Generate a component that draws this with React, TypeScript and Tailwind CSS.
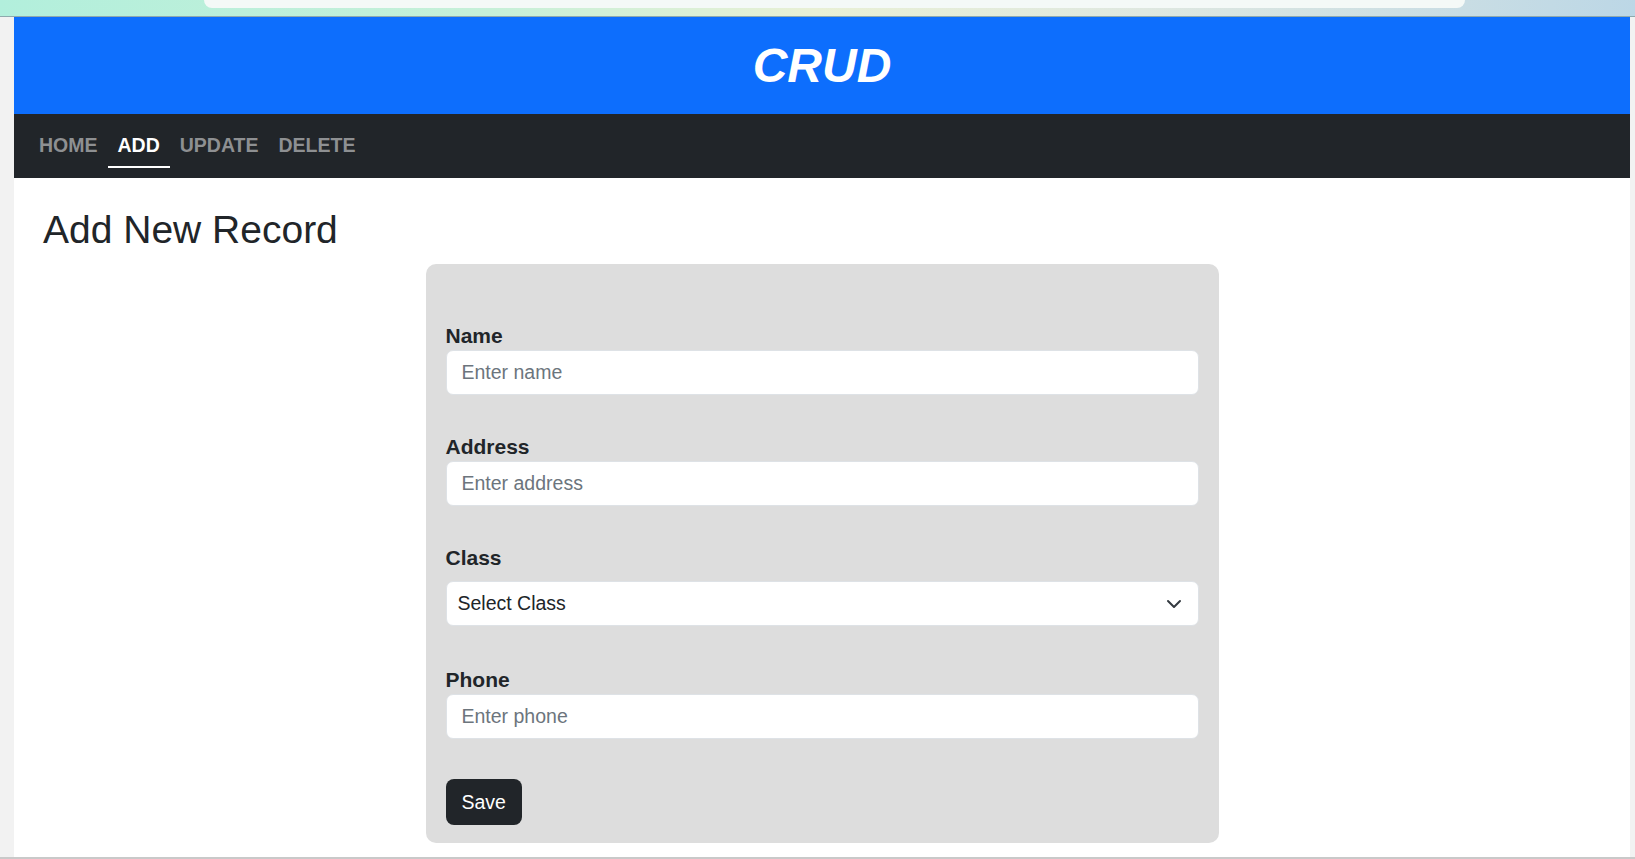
import { useState } from "react";

const links = ["HOME", "ADD", "UPDATE", "DELETE"];

function Field({ label, placeholder, gap = "mb-[38px]" }: { label: string; placeholder: string; gap?: string }) {
  return (
    <div className={`${gap} flex flex-col`}>
      <label className="text-[21px] font-bold leading-[28px] text-[#212529]">{label}</label>
      <input
        type="text"
        placeholder={placeholder}
        className="h-[45px] w-full rounded-[7px] border border-[#dee2e6] bg-white pl-[15px] text-[19.5px] text-[#212529] outline-none placeholder:text-[#6c757d]"
      />
    </div>
  );
}

export default function App() {
  const [active] = useState("ADD");

  return (
    <div className="flex h-[859px] flex-col overflow-hidden bg-white font-['Liberation_Sans',Arial,sans-serif]">
      {/* browser chrome strip */}
      <div className="h-[17px] shrink-0 border-b border-[#8fa9ad] bg-[linear-gradient(100deg,#b2efdc_0%,#c6f0d8_30%,#e9f0d5_50%,#dfe8e0_70%,#bcd7e6_100%)]">
        <div className="ml-[204px] h-[8px] w-[1261px] rounded-b-[9px] bg-[#f4f9f7]" />
      </div>

      <div className="flex flex-1">
        <div className="w-[14px] shrink-0 bg-[#f2f2f2]" />

        <div className="flex flex-1 flex-col">
          <header className="flex h-[97px] items-center justify-center bg-[#0d6efd]">
            <h1 className="text-[48px] font-bold italic leading-[57px] text-white">CRUD</h1>
          </header>

          <nav className="flex h-[64px] items-start bg-[#212529] pl-[15px] pt-[17px]">
            {links.map((l) => (
              <a
                key={l}
                href="#"
                className={
                  l === active
                    ? "border-b-2 border-white px-[10px] pb-[6px] text-[19.5px] font-bold leading-[29px] text-white"
                    : "border-b-2 border-transparent px-[10px] pb-[6px] text-[19.5px] font-bold leading-[29px] text-[#8e9092]"
                }
              >
                {l}
              </a>
            ))}
          </nav>

          <main className="flex-1 pt-[28px]">
            <h2 className="pl-[29px] text-[39px] leading-[47px] text-[#212529]">Add New Record</h2>

            <form className="mx-auto mt-[11px] w-[793px] rounded-[10px] bg-[#dddddd] px-[20px] pb-[18px] pt-[58px]">
              <Field label="Name" placeholder="Enter name" />
              <Field label="Address" placeholder="Enter address" />

              <div className="mb-[40px] flex flex-col">
                <label className="mb-[9px] text-[21px] font-bold leading-[28px] text-[#212529]">Class</label>
                <div className="relative">
                  <select className="h-[45px] w-full appearance-none rounded-[7px] border border-[#dee2e6] bg-white pl-[11px] text-[19.5px] text-[#212529] outline-none">
                    <option>Select Class</option>
                    <option>Class 1</option>
                    <option>Class 2</option>
                  </select>
                  <svg
                    className="pointer-events-none absolute right-[17px] top-1/2 h-[16px] w-[16px] -translate-y-1/2"
                    viewBox="0 0 16 16"
                    fill="none"
                    stroke="#343a40"
                    strokeWidth="2"
                    strokeLinecap="round"
                    strokeLinejoin="round"
                  >
                    <path d="m2 5 6 6 6-6" />
                  </svg>
                </div>
              </div>

              <Field label="Phone" placeholder="Enter phone" gap="mb-[40px]" />

              <button
                type="button"
                className="rounded-[8px] bg-[#212529] px-[16px] py-[8px] text-[19.5px] leading-[30px] text-white"
              >
                Save
              </button>
            </form>
          </main>
        </div>

        <div className="w-[5px] shrink-0 bg-[#f2f2f2]" />
      </div>

      <div className="h-[2px] shrink-0 bg-[#c9c9c9]" />
    </div>
  );
}
